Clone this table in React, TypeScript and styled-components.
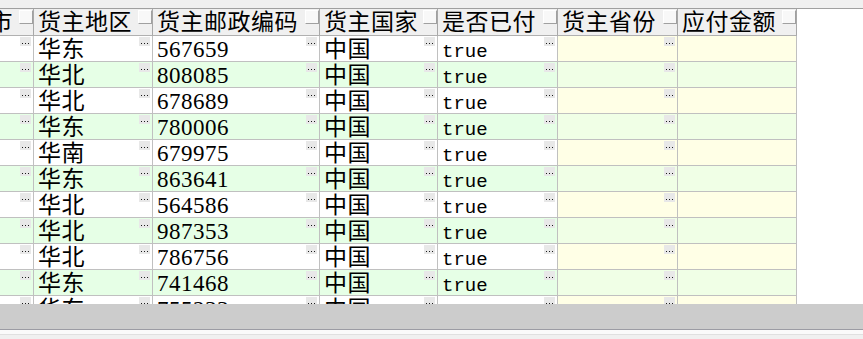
import styled, { createGlobalStyle } from 'styled-components';

const GlobalStyle = createGlobalStyle`
    html,
    body {
        margin: 0;
        padding: 0;
        background: #ffffff;
        overflow: hidden;
    }
`;

interface Column {
    title: string;
    width: number;
    tinted: boolean;
    more: boolean;
}

const COLUMNS: Column[] = [
    { title: '货主城市', width: 119, tinted: false, more: true },
    { title: '货主地区', width: 119, tinted: false, more: true },
    { title: '货主邮政编码', width: 167, tinted: false, more: true },
    { title: '货主国家', width: 118, tinted: false, more: true },
    { title: '是否已付', width: 120, tinted: false, more: true },
    { title: '货主省份', width: 120, tinted: true, more: true },
    { title: '应付金额', width: 119, tinted: true, more: false }
];
const TEMPLATE = COLUMNS.map((c) => `${c.width}px`).join(' ');

const ROWS = [
    ['华东', '567659'],
    ['华北', '808085'],
    ['华北', '678689'],
    ['华东', '780006'],
    ['华南', '679975'],
    ['华东', '863641'],
    ['华北', '564586'],
    ['华北', '987353'],
    ['华北', '786756'],
    ['华东', '741468'],
    ['华东', '755233']
];

const Frame = styled.div`
    width: 863px;
    height: 339px;
    display: flex;
    flex-direction: column;
    font-family: 'Liberation Serif', 'Noto Sans CJK SC', serif;
    color: #000000;
`;

const TopStrip = styled.div`
    flex: none;
    height: 8px;
    background: #f0f0f0;
    border-bottom: 1px solid #a0a0a0;
`;

const Viewport = styled.div`
    flex: none;
    height: 295px;
    overflow: hidden;
`;

const Sheet = styled.div`
    margin-left: -85px;
    width: max-content;
`;

const GridRow = styled.div`
    display: grid;
    grid-template-columns: ${TEMPLATE};
`;

const HeadCell = styled.div`
    display: flex;
    align-items: flex-start;
    box-sizing: border-box;
    height: 27px;
    padding-left: 4px;
    background: #f0f0f0;
    border-right: 1px solid #a8a8a8;
    border-bottom: 1px solid #b0b0b0;
`;

const HeadText = styled.div`
    flex: 1;
    min-width: 0;
    white-space: nowrap;
    font-size: 23px;
    line-height: 24px;
    padding-top: 2px;
    letter-spacing: 0.5px;
`;

const FilterButton = styled.span`
    flex: none;
    box-sizing: border-box;
    width: 14px;
    height: 14px;
    margin-top: 1px;
    background: #f8f8f8;
    border-top: 1px solid #ffffff;
    border-left: 1px solid #ffffff;
    border-right: 1px solid #a0a0a0;
    border-bottom: 1px solid #a0a0a0;
`;

const toneOf = (striped: boolean, tinted: boolean) => {
    if (tinted) return striped ? '#f0ffe6' : '#ffffe6';
    return striped ? '#e6ffe6' : '#ffffff';
};

const Cell = styled.div<{ $striped: boolean; $tinted: boolean }>`
    display: flex;
    align-items: flex-start;
    box-sizing: border-box;
    height: 26px;
    padding-left: 4px;
    background: ${({ $striped, $tinted }) => toneOf($striped, $tinted)};
    border-right: 1px solid #c0c0c0;
    border-bottom: 1px solid #c0c0c0;
`;

const Value = styled.div`
    flex: 1;
    min-width: 0;
    white-space: nowrap;
    font-size: 23px;
    line-height: 23px;
    padding-top: 2px;
    letter-spacing: 0.5px;
`;

const Code = styled.span`
    font-family: 'Liberation Mono', monospace;
    font-size: 19px;
    letter-spacing: 0;
`;

const MoreButton = styled.span`
    flex: none;
    box-sizing: border-box;
    width: 11px;
    height: 9px;
    margin: 1px 2px 0 0;
    padding-bottom: 2px;
    background: #e8e8e8;
    display: flex;
    align-items: flex-end;
    justify-content: center;
    gap: 2px;

    & > i {
        width: 1px;
        height: 1px;
        background: #1a1a1a;
    }
`;

const ScrollTrack = styled.div`
    flex: none;
    height: 25px;
    background: #cccccc;
`;

const StatusBar = styled.div`
    flex: none;
    height: 9px;
    border-top: 1px solid #9c9ca4;
    background: linear-gradient(
        #fafafa 0,
        #fafafa 4px,
        #e0e0e0 4px,
        #e0e0e0 5px,
        #f0f0f0 5px
    );
`;

function App() {
    return (
        <>
            <GlobalStyle />
            <Frame>
                <TopStrip />
                <Viewport>
                    <Sheet>
                        <GridRow>
                            {COLUMNS.map((col, index) => (
                                <HeadCell key={index}>
                                    <HeadText>{col.title}</HeadText>
                                    <FilterButton />
                                </HeadCell>
                            ))}
                        </GridRow>
                        {ROWS.map(([region, zip], rowIndex) => {
                            const values = ['', region, zip, '中国', 'true', '', ''];
                            return (
                                <GridRow key={rowIndex}>
                                    {COLUMNS.map((col, colIndex) => (
                                        <Cell
                                            key={colIndex}
                                            $striped={rowIndex % 2 === 1}
                                            $tinted={col.tinted}
                                        >
                                            <Value>
                                                {colIndex === 4 ? (
                                                    <Code>{values[colIndex]}</Code>
                                                ) : (
                                                    values[colIndex]
                                                )}
                                            </Value>
                                            {col.more && (
                                                <MoreButton>
                                                    <i />
                                                    <i />
                                                    <i />
                                                </MoreButton>
                                            )}
                                        </Cell>
                                    ))}
                                </GridRow>
                            );
                        })}
                    </Sheet>
                </Viewport>
                <ScrollTrack />
                <StatusBar />
            </Frame>
        </>
    );
}

export default App;
